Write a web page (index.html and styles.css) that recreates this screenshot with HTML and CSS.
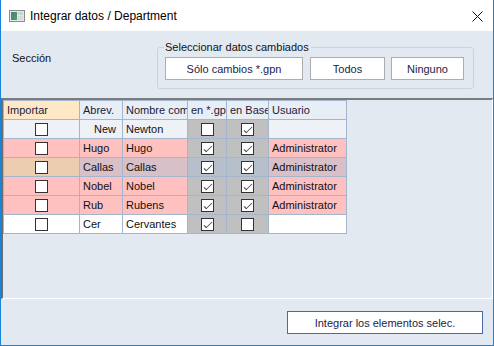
FILE: index.html
```html
<!DOCTYPE html>
<html lang="es">
<head>
  <meta charset="UTF-8">
  <title>Integrar datos / Department</title>
  <link rel="stylesheet" href="styles.css">
</head>
<body>
  <div class="window">
    <div class="titlebar">
      <svg class="app-icon" width="16" height="12" viewBox="0 0 16 12">
        <defs>
          <linearGradient id="pane" x1="0" y1="0" x2="1" y2="1">
            <stop offset="0" stop-color="#4f7f7a"/>
            <stop offset="1" stop-color="#3fa06a"/>
          </linearGradient>
        </defs>
        <rect x="0.5" y="0.5" width="15" height="11" fill="#e8e8e8" stroke="#8c8c8c"/>
        <rect x="2" y="2" width="6" height="8" fill="url(#pane)"/>
        <rect x="9" y="2" width="5" height="3" fill="#c8d4d0"/>
        <rect x="9" y="6" width="5" height="4" fill="#d6dcda"/>
      </svg>
      <span class="title">Integrar datos / Department</span>
      <svg class="close" width="11" height="11" viewBox="0 0 11 11">
        <path d="M0.5 0.5 L10.5 10.5 M10.5 0.5 L0.5 10.5" stroke="#111" stroke-width="1"/>
      </svg>
    </div>

    <div class="top">
      <div class="section">Sección</div>
      <fieldset class="group">
        <legend>Seleccionar datos cambiados</legend>
        <button class="btn btn-gpn">Sólo cambios *.gpn</button>
        <button class="btn btn-all">Todos</button>
        <button class="btn btn-none">Ninguno</button>
      </fieldset>
    </div>

    <div class="gridpanel">
      <div class="grid">
        <div class="cell head head-sel">Importar</div>
        <div class="cell head">Abrev.</div>
        <div class="cell head">Nombre completo</div>
        <div class="cell head">en *.gpn</div>
        <div class="cell head">en Base</div>
        <div class="cell head">Usuario</div>

        <div class="cell light center"><span class="chk"></span></div>
        <div class="cell light indent">New</div>
        <div class="cell light">Newton</div>
        <div class="cell grey center"><span class="chk"></span></div>
        <div class="cell grey center"><span class="chk on"></span></div>
        <div class="cell light"></div>

        <div class="cell pink center"><span class="chk"></span></div>
        <div class="cell pink">Hugo</div>
        <div class="cell pink">Hugo</div>
        <div class="cell grey center"><span class="chk on"></span></div>
        <div class="cell grey center"><span class="chk on"></span></div>
        <div class="cell pink">Administrator</div>

        <div class="cell cur center"><span class="chk"></span></div>
        <div class="cell sel">Callas</div>
        <div class="cell sel">Callas</div>
        <div class="cell sel-grey center"><span class="chk on"></span></div>
        <div class="cell sel-grey center"><span class="chk on"></span></div>
        <div class="cell sel">Administrator</div>

        <div class="cell pink center"><span class="chk"></span></div>
        <div class="cell pink">Nobel</div>
        <div class="cell pink">Nobel</div>
        <div class="cell grey center"><span class="chk on"></span></div>
        <div class="cell grey center"><span class="chk on"></span></div>
        <div class="cell pink">Administrator</div>

        <div class="cell pink center"><span class="chk"></span></div>
        <div class="cell pink">Rub</div>
        <div class="cell pink">Rubens</div>
        <div class="cell grey center"><span class="chk on"></span></div>
        <div class="cell grey center"><span class="chk on"></span></div>
        <div class="cell pink">Administrator</div>

        <div class="cell white center"><span class="chk"></span></div>
        <div class="cell white">Cer</div>
        <div class="cell white">Cervantes</div>
        <div class="cell grey center"><span class="chk on"></span></div>
        <div class="cell grey center"><span class="chk"></span></div>
        <div class="cell white"></div>
      </div>
    </div>

    <div class="bottom">
      <button class="btn btn-main">Integrar los elementos selec.</button>
    </div>
  </div>
</body>
</html>
```

FILE: styles.css
```css
body {
  margin: 0;
  font-family: "Liberation Sans", Arial, sans-serif;
  font-size: 11px;
  color: #111;
  background: #e2e9f1; }

.window {
  width: 494px;
  height: 346px;
  box-sizing: border-box;
  border: 1px solid #1883d7;
  border-top: none;
  display: flex;
  flex-direction: column;
  background: #e2e9f1; }

/* title bar */
.titlebar {
  height: 31px;
  flex: none;
  background: #fff;
  display: flex;
  align-items: center;
  padding: 0 10px 0 8px; }
.app-icon { margin-right: 5px; margin-top: 1px; }
.title { font-size: 12px; color: #000; flex: 1; }
.close { margin-top: 1px; }

/* top section */
.top {
  height: 67px;
  flex: none;
  display: flex; }
.section {
  width: 145px;
  padding: 21px 0 0 11px; }

.group {
  margin: 10px 0 0 0;
  padding: 3px 6px 5px 7px;
  width: 317px;
  box-sizing: border-box;
  height: 48px;
  border: 1px solid #cbd2da;
  border-radius: 3px;
  display: flex;
  gap: 7px; }
.group legend {
  padding: 0 2px 0 1px;
  margin-left: -1px;
  line-height: 13px; }

.btn {
  font-family: "Liberation Sans", Arial, sans-serif;
  font-size: 11px;
  color: #1c1c48;
  background: #fff;
  border: 1px solid #adadad;
  height: 23px;
  padding: 0;
  border-radius: 0; }
.btn-gpn { width: 138px; }
.btn-all { width: 75px; }
.btn-none { width: 73px; margin-left: -1px; }

/* grid */
.gridpanel {
  height: 201px;
  flex: none;
  box-sizing: border-box;
  border-top: 2px solid #7c7c7c;
  border-left: 2px solid #6d6d6d;
  border-right: 1px solid #fff;
  border-bottom: 1px solid #fff; }

.grid {
  display: grid;
  grid-template-columns: 76px 43px 65px 39px 42px 78px;
  grid-auto-rows: 19px;
  width: max-content;
  border-top: 1px solid #a3b6cd;
  border-left: 1px solid #a3b6cd; }

.cell {
  box-sizing: border-box;
  border-right: 1px solid #a3b6cd;
  border-bottom: 1px solid #a3b6cd;
  padding: 0 0 0 3px;
  line-height: 18px;
  white-space: nowrap;
  overflow: hidden; }
.center { display: flex; justify-content: center; align-items: center; padding: 0; }
.indent { padding-left: 14px; }

.head { background: #e8eef5; color: #1a1a40; }
.head-sel { background: #fee8c6; }
.light { background: #eef2f7; }
.pink { background: #ffc0c0; }
.white { background: #fff; }
.grey { background: #c0c0c0; }
.cur { background: #eccdb0; }
.sel { background: #d8c0c8; }
.sel-grey { background: #b7bfca; }

.chk {
  width: 13px;
  height: 13px;
  box-sizing: border-box;
  border: 1px solid #333;
  background: #fff;
  position: relative; }
.chk.on::after {
  content: "";
  position: absolute;
  left: 4px;
  top: 1px;
  width: 3px;
  height: 7px;
  border-right: 1px solid #4a4a4a;
  border-bottom: 1px solid #4a4a4a;
  transform: skewX(-8deg) rotate(42deg);
  transform-origin: center; }

/* bottom */
.bottom {
  flex: 1;
  display: flex;
  justify-content: flex-end;
  align-items: flex-start;
  padding: 12px 10px 0 0; }
.btn-main {
  width: 196px;
  border-color: #4a6aa6; }
```
